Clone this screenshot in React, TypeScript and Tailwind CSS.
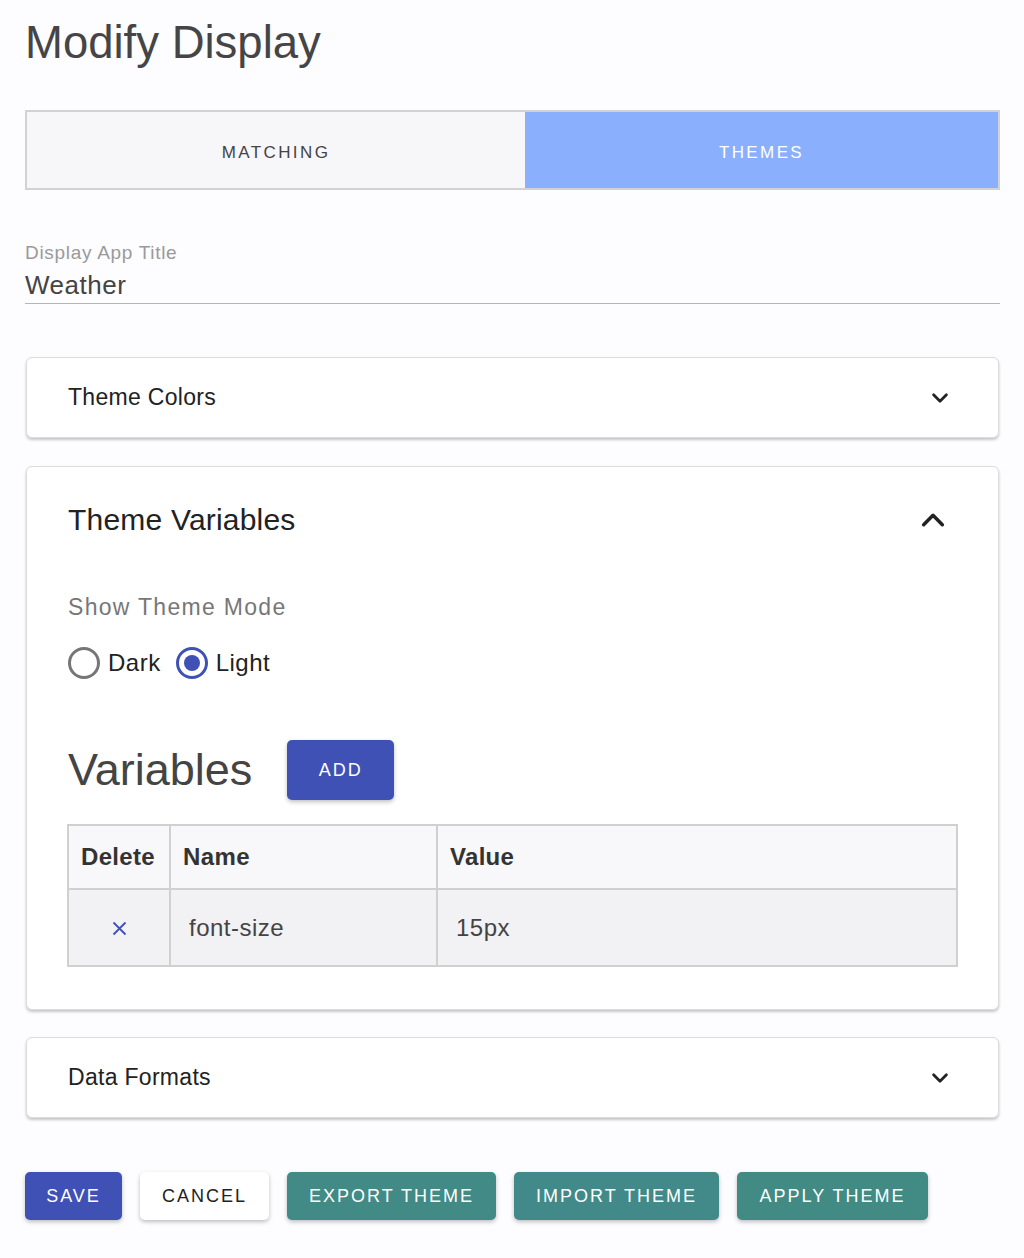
import React, { useState } from 'react';

const ChevronDown = ({ size = 16 }: { size?: number }) => (
  <svg width={size} height={size} viewBox="0 0 24 24" fill="none" stroke="#222" strokeWidth={3} strokeLinecap="round" strokeLinejoin="round">
    <path d="M5 8.5l7 7 7-7" />
  </svg>
);

const ChevronUp = ({ size = 24 }: { size?: number }) => (
  <svg width={size} height={size} viewBox="0 0 24 24" fill="none" stroke="#222" strokeWidth={3} strokeLinecap="round" strokeLinejoin="round">
    <path d="M4 16l8-8 8 8" />
  </svg>
);

const Radio = ({ checked, label, onClick }: { checked: boolean; label: string; onClick: () => void }) => (
  <button onClick={onClick} className="flex items-center gap-[8px]">
    <span
      className={
        checked
          ? 'flex h-[32px] w-[32px] items-center justify-center rounded-full border-[3px] border-[#3f51b5]'
          : 'flex h-[32px] w-[32px] items-center justify-center rounded-full border-[3px] border-[#767676]'
      }
    >
      {checked && <span className="h-[16px] w-[16px] rounded-full bg-[#3f51b5]" />}
    </span>
    <span className="text-[24px] leading-[30px] tracking-[0.5px] text-[#222]">{label}</span>
  </button>
);

const CollapsedCard = ({ title }: { title: string }) => (
  <div className="flex h-[81px] items-center justify-between rounded-[6px] border border-[#dcdcdc] bg-white pl-[41px] pr-[47px] shadow-[0_2px_3px_rgba(0,0,0,0.22)]">
    <span className="text-[23px] tracking-[0.3px] text-[#222]">{title}</span>
    <ChevronDown size={22} />
  </div>
);

export default function App() {
  const [tab, setTab] = useState('themes');
  const [mode, setMode] = useState('light');

  return (
    <div className="min-h-[1258px] bg-[#fdfcfe] pl-[25px] pr-[24px] pt-[14px] font-['Liberation_Sans',Arial,sans-serif]">
      <h1 className="text-[45.5px] leading-[58px] text-[#454545]">Modify Display</h1>

      {/* Tabs */}
      <div className="mt-[38px] grid h-[80px] grid-cols-[498px_1fr] border-2 border-[#d2d2d4]">
        <button
          onClick={() => setTab('matching')}
          className={
            tab === 'matching'
              ? 'bg-[#8ab0fd] pt-[6px] text-[17px] tracking-[2.4px] text-white'
              : 'bg-[#f7f6f8] pt-[6px] text-[17px] tracking-[2.4px] text-[#444]'
          }
        >
          MATCHING
        </button>
        <button
          onClick={() => setTab('themes')}
          className={
            tab === 'themes'
              ? 'bg-[#8ab0fd] pt-[6px] text-[17px] tracking-[2.4px] text-white'
              : 'bg-[#f7f6f8] pt-[6px] text-[17px] tracking-[2.4px] text-[#444]'
          }
        >
          THEMES
        </button>
      </div>

      {/* Title field */}
      <div className="mt-[52px] border-b border-[#b5b5b5] pb-[3px]">
        <div className="text-[19px] leading-[22px] tracking-[0.7px] text-[#9a9a9a]">Display App Title</div>
        <div className="mt-[6px] text-[26px] leading-[30px] tracking-[0.5px] text-[#444]">Weather</div>
      </div>

      <div className="mt-[53px] px-[1px]">
        <CollapsedCard title="Theme Colors" />

        {/* Theme Variables */}
        <div className="mt-[28px] rounded-[6px] border border-[#dcdcdc] bg-white pb-[42px] pl-[40px] pr-[40px] pt-[36px] shadow-[0_2px_3px_rgba(0,0,0,0.22)]">
          <div className="flex items-center justify-between pl-[1px] pr-[11px]">
            <span className="text-[30px] leading-[34px] tracking-[0.2px] text-[#222]">Theme Variables</span>
            <ChevronUp size={28} />
          </div>

          <div className="mt-[56px] pl-[1px] text-[23px] leading-[28px] tracking-[1.3px] text-[#777]">Show Theme Mode</div>
          <div className="mt-[26px] flex items-center gap-[15px] pl-[1px]">
            <Radio checked={mode === 'dark'} label="Dark" onClick={() => setMode('dark')} />
            <Radio checked={mode === 'light'} label="Light" onClick={() => setMode('light')} />
          </div>

          <div className="mt-[61px] flex h-[60px] items-center gap-[35px] pl-[1px]">
            <span className="text-[45px] leading-[60px] text-[#444]">Variables</span>
            <button className="h-[60px] w-[107px] rounded-[5px] bg-[#3f51b5] text-[18px] tracking-[2px] text-white shadow-[0_2px_4px_rgba(0,0,0,0.25)]">
              ADD
            </button>
          </div>

          <table className="mt-[24px] w-full border-collapse border-2 border-[#d0d0d0] text-left">
            <thead>
              <tr className="h-[64px] bg-[#f8f7f9]">
                <th className="w-[102px] border-2 border-[#d0d0d0] px-[12px] text-[24px] font-bold tracking-[0.3px] text-[#333]">Delete</th>
                <th className="w-[267px] border-2 border-[#d0d0d0] px-[12px] text-[24px] font-bold tracking-[0.4px] text-[#333]">Name</th>
                <th className="border-2 border-[#d0d0d0] px-[12px] text-[24px] font-bold tracking-[0.3px] text-[#333]">Value</th>
              </tr>
            </thead>
            <tbody>
              <tr className="h-[77px] bg-[#f2f1f3]">
                <td className="border-2 border-[#d0d0d0] text-center align-middle">
                  <button className="inline-flex items-center justify-center align-middle">
                    <svg width="15" height="15" viewBox="0 0 15 15" fill="none" stroke="#3f51b5" strokeWidth={1.8}>
                      <path d="M1.5 1.5l12 12M13.5 1.5l-12 12" />
                    </svg>
                  </button>
                </td>
                <td className="border-2 border-[#d0d0d0] px-[18px] text-[24px] tracking-[0.5px] text-[#444]">font-size</td>
                <td className="border-2 border-[#d0d0d0] px-[18px] text-[24px] tracking-[0.5px] text-[#444]">15px</td>
              </tr>
            </tbody>
          </table>
        </div>

        <div className="mt-[27px]">
          <CollapsedCard title="Data Formats" />
        </div>
      </div>

      {/* Footer buttons */}
      <div className="mt-[54px] flex gap-[18px]">
        <button className="h-[48px] w-[97px] rounded-[5px] bg-[#3f51b5] text-[18px] tracking-[2px] text-white shadow-[0_2px_4px_rgba(0,0,0,0.25)]">
          SAVE
        </button>
        <button className="h-[48px] w-[129px] rounded-[5px] bg-white text-[18px] tracking-[2px] text-[#222] shadow-[0_2px_4px_rgba(0,0,0,0.25)]">
          CANCEL
        </button>
        <button className="h-[48px] w-[209px] rounded-[5px] bg-[#418a85] text-[18px] tracking-[2px] text-white shadow-[0_2px_4px_rgba(0,0,0,0.25)]">
          EXPORT THEME
        </button>
        <button className="h-[48px] w-[205px] rounded-[5px] bg-[#418a89] text-[18px] tracking-[2px] text-white shadow-[0_2px_4px_rgba(0,0,0,0.25)]">
          IMPORT THEME
        </button>
        <button className="h-[48px] w-[191px] rounded-[5px] bg-[#428b84] text-[18px] tracking-[2px] text-white shadow-[0_2px_4px_rgba(0,0,0,0.25)]">
          APPLY THEME
        </button>
      </div>
    </div>
  );
}
